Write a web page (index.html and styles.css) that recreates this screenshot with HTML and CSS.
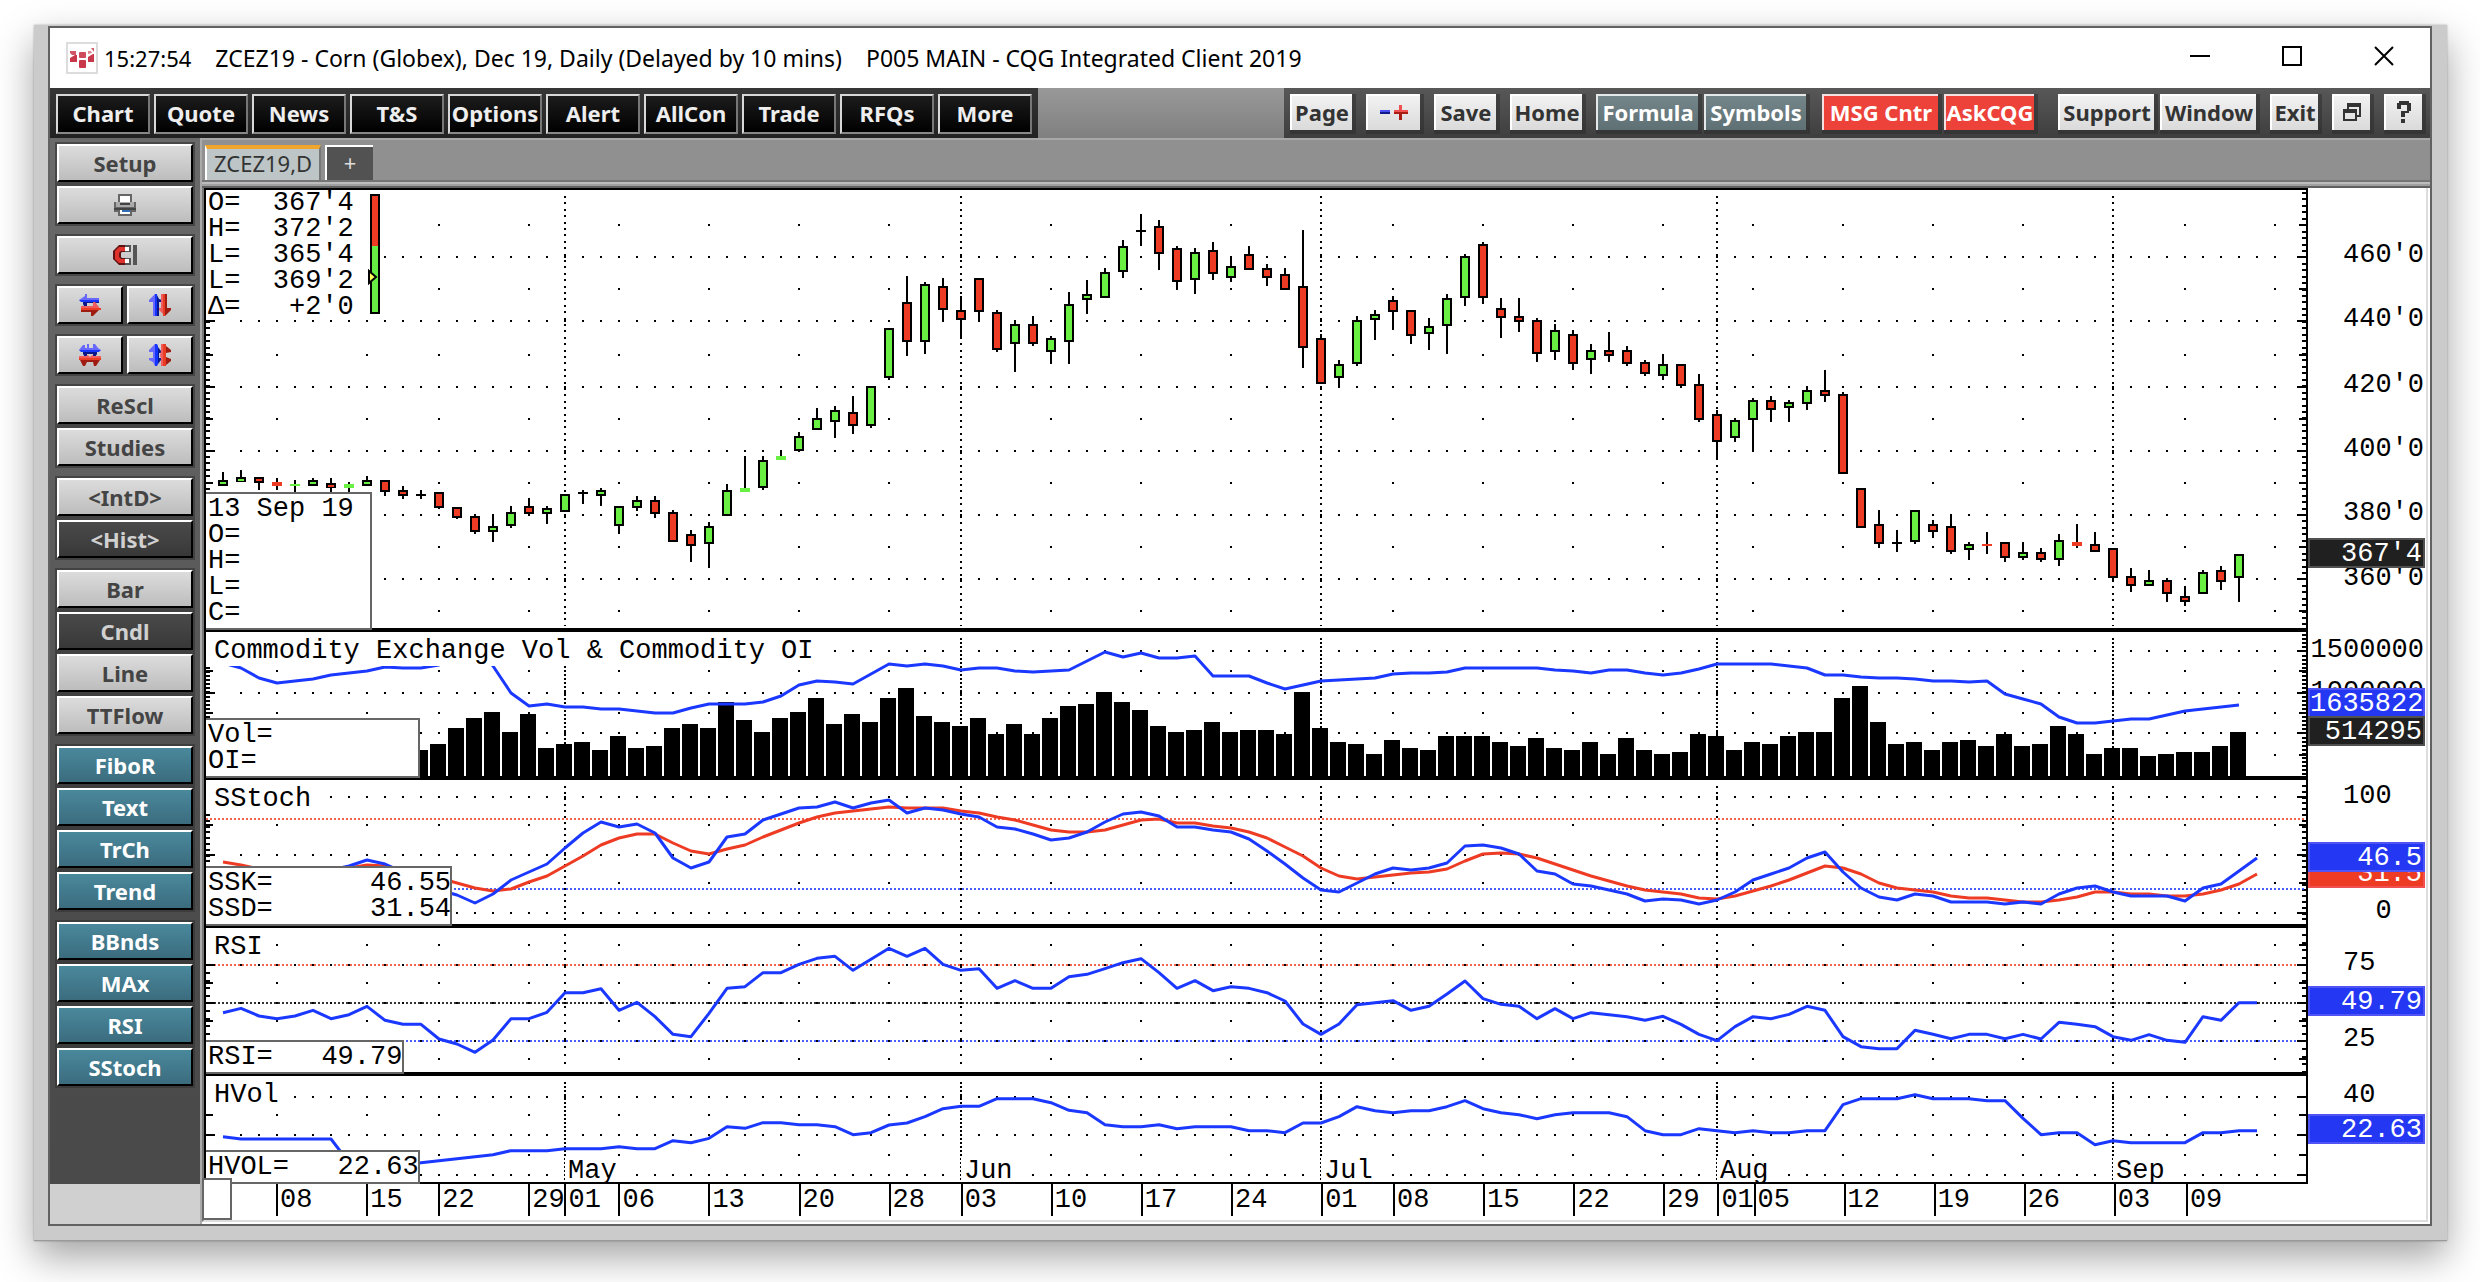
FILE: index.html
```
<!DOCTYPE html>
<html lang="en">
<head>
<meta charset="utf-8">
<title>ZCEZ19 - Corn (Globex), Dec 19, Daily - CQG Integrated Client 2019</title>
<link rel="stylesheet" href="styles.css">
</head>
<body>
<div class="frame">
<div class="window">

<header class="titlebar">
  <svg class="app-icon" viewBox="0 0 32 32" width="32" height="32" aria-hidden="true">
    <rect x="1" y="1" width="30" height="30" fill="#fff" stroke="#dcdcdc" stroke-width="2"/>
    <g fill="#c8374a">
      <path d="M4 9h6v4h-4l-2-2z" opacity=".85"/><path d="M4 20v-4l5-3h2v7z"/>
      <rect x="13" y="10" width="7" height="6" rx="1" opacity=".9"/><rect x="13" y="18" width="7" height="8" rx="1"/>
      <path d="M22 20v-5l5-3h1v8z"/><path d="M22 12v-3h3l1 2z" opacity=".6"/><path d="M25 6h3v4z" opacity=".8"/>
    </g>
  </svg>
  <h1 class="caption"><span class="clock">15:27:54</span><span>ZCEZ19 - Corn (Globex), Dec 19, Daily (Delayed by 10 mins)</span><span>P005 MAIN - CQG Integrated Client 2019</span></h1>
  <div class="controls">
    <button class="control" aria-label="Minimize"><svg viewBox="0 0 20 20" width="20" height="20"><path d="M0 10h20" stroke="#000" stroke-width="2"/></svg></button>
    <button class="control" aria-label="Maximize"><svg viewBox="0 0 20 20" width="20" height="20"><path d="M1 1h18v18H1z" fill="none" stroke="#000" stroke-width="2"/></svg></button>
    <button class="control" aria-label="Close"><svg viewBox="0 0 20 20" width="20" height="20"><path d="M1 1l18 18M19 1L1 19" stroke="#000" stroke-width="2"/></svg></button>
  </div>
</header>

<nav class="toolbar" aria-label="Main">
  <div class="apps">
    <button class="app">Chart</button><button class="app">Quote</button><button class="app">News</button><button class="app">T&amp;S</button><button class="app">Options</button><button class="app">Alert</button><button class="app">AllCon</button><button class="app">Trade</button><button class="app">RFQs</button><button class="app">More</button>
  </div>
  <div class="tools">
    <div class="cluster wide"><button class="tool w62">Page</button><button class="tool w54" aria-label="Less or more"><svg viewBox="0 0 28 20" width="28" height="20"><path d="M0 8h10v2H0z" fill="#4a50f0"/><path d="M0 10h10v2H0z" fill="#10188c"/><path d="M14 8h5V3h3v5h6v2H14z" fill="#f05050"/><path d="M14 10h14v2h-6v6h-3v-6h-5z" fill="#a81c14"/></svg></button><button class="tool w62">Save</button><button class="tool w72">Home</button></div>
    <div class="cluster"><button class="tool slate w102">Formula</button><button class="tool slate w102">Symbols</button></div>
    <div class="cluster messages"><button class="tool alert w116">MSG Cntr</button><button class="tool alert w90">AskCQG</button></div>
    <div class="cluster last"><button class="tool w96">Support</button><button class="tool w96">Window</button></div>
    <div class="cluster wide"><button class="tool w48">Exit</button><button class="tool w38" aria-label="Restore"><svg viewBox="0 0 18 18" width="18" height="18"><path fill="#333" fill-rule="evenodd" d="M4 0h14v14h-4v-2h2V4H6v2H4zM0 6h14v12H0zm2 4v6h10v-6z"/></svg></button><button class="tool w38" aria-label="Help"><svg viewBox="0 0 14 22" width="14" height="22"><path fill="#333" d="M2 0h10v2h2v8h-2v2H8v4H4v-6h6V4H4v4H0V2h2zM4 18h4v4H4z"/></svg></button></div>
  </div>
</nav>

<div class="main">
<aside class="sidebar">
  <div class="tray">
    <div class="group"><button class="key">Setup</button>
    <button class="key" aria-label="Print"><svg viewBox="0 0 22 22" width="22" height="22"><path fill="#666" d="M4 0h14v8h4v10h-4v4H4v-4H0V8h4z"/><path fill="#fff" d="M6 2h10v6H6z"/><path fill="#aaa" d="M2 8h18v5H2z"/><path fill="#444" d="M6 9h10v2H6zM0 14h22v2H0z"/><path fill="#fff" d="M6 16h10v4H6z"/><path fill="#2f6db5" d="M8 16h8v2H8z"/></svg></button></div>
    <div class="group"><button class="key" aria-label="Magnet"><svg viewBox="0 0 24 20" width="24" height="20"><path fill="#5c1414" d="M6 0h6v7H9L8 8v4l1 1h3v7H6l-4-4-2-2V6l2-2z"/><path fill="#e0322c" d="M6 2h6v4H8L6 8v4l2 2h4v4H6l-4-4V6z"/><path fill="#fff" d="M12 2h4v4h-4zM12 14h4v4h-4z"/><path fill="#555" d="M12 0h6v7h-6V6h4V2h-4zM12 13h6v7h-6v-2h4v-4h-4zM20 0h4v20h-4z"/></svg></button></div>
    <div class="group pair"><button class="key" aria-label="Scroll horizontally"><svg viewBox="0 0 22 22" width="22" height="22"><path fill="#6868ff" d="M6 0h2v4h12v2H0l6-4z"/><path fill="#1434ff" d="M0 6h20v2H2z"/><path fill="#0a168c" d="M4 8h4v6H6l-2-4zM8 8h12v1H8z"/><path fill="#f05c5c" d="M2 12h12V8h2l4 5v1H2z"/><path fill="#e83c24" d="M2 14h20v2H2z"/><path fill="#a01c10" d="M2 16h18l-4 4-2 2h-2v-4H2z"/></svg></button><button class="key" aria-label="Scroll vertically"><svg viewBox="0 0 22 22" width="22" height="22"><path fill="#6868ff" d="M6 0v22H4V8H0V6z"/><path fill="#1434ff" d="M6 0h2v22H6z"/><path fill="#0a168c" d="M8 1l2 4 3 1v2h-3v14H8z"/><path fill="#f05c5c" d="M12 0h2v20l-4-4v-2h2z"/><path fill="#e83c24" d="M14 0h2v22h-2z"/><path fill="#a01c10" d="M16 0h2v14h4v2l-6 6z"/></svg></button></div>
    <div class="group pair"><button class="key" aria-label="Scale horizontally"><svg viewBox="0 0 22 22" width="22" height="22"><path fill="#6868ff" d="M4 1h2v3h2V0h2v4h4V0h2l3 4 3 2H0z"/><path fill="#1434ff" d="M0 6h22l-2 2H2z"/><path fill="#0a168c" d="M4 8h14v2l-2 3h-2v-3H8v3H6l-2-3z"/><path fill="#f05c5c" d="M0 12h7l2-1 2 2 2-2 2 1h7v2H0z"/><path fill="#e83c24" d="M0 14h22v2H0z"/><path fill="#a01c10" d="M1 16h20l-4 6h-2l-1-4H8l-2 4H4z"/></svg></button><button class="key" aria-label="Scale vertically"><svg viewBox="0 0 22 22" width="22" height="22"><path fill="#6868ff" d="M6 0v22l-2-4-4-2v-2h4V8H0V6z"/><path fill="#1434ff" d="M6 0h2l1 2v18l-1 2H6z"/><path fill="#0a168c" d="M9 3l3 4v2h-2v5h2v2l-3 4z"/><path fill="#f05c5c" d="M12 0h2v22h-2v-7l-1-4 1-4z"/><path fill="#e83c24" d="M14 0h3v22h-3z"/><path fill="#a01c10" d="M17 2l5 4v2l-5 1v4l5 2v2l-5 4z"/></svg></button></div>
    <div class="group"><button class="key">ReScl</button><button class="key">Studies</button></div>
    <div class="group"><button class="key">&lt;IntD&gt;</button><button class="key on">&lt;Hist&gt;</button></div>
    <div class="group"><button class="key">Bar</button><button class="key on">Cndl</button><button class="key">Line</button><button class="key">TTFlow</button></div>
    <div class="group"><button class="key study">FiboR</button><button class="key study">Text</button><button class="key study">TrCh</button><button class="key study">Trend</button></div>
    <div class="group"><button class="key study">BBnds</button><button class="key study">MAx</button><button class="key study">RSI</button><button class="key study">SStoch</button></div>
  </div>
</aside>

<section class="workspace">
  <div class="tabs">
    <button class="tab">ZCEZ19,D</button><button class="tab add">+</button>
  </div>
  <div class="bevel"></div>
  <div class="charts">
    <section class="panel price">
      <div class="plot">
        <svg class="drawing" id="price" viewBox="206 190 2100 438" preserveAspectRatio="none"></svg>
        <div class="quote"><pre class="readout">O=  367'4
H=  372'2
L=  365'4
L=  369'2
Δ=   +2'0</pre><svg class="range" viewBox="0 0 12 120" width="12" height="120"><rect x="3" y="1" width="8" height="118" fill="#66ee44" stroke="#000" stroke-width="2"/><rect x="4" y="2" width="6" height="50" fill="#ee3b24"/><path d="M1 77v12l7-6z" fill="#ffff55" stroke="#000" stroke-width="2"/></svg></div>
        <pre class="legend w166">13 Sep 19
O=
H=
L=
C=</pre>
      </div>
      <div class="scale" id="scale-price"></div>
    </section>
    <section class="panel">
      <div class="plot">
        <svg class="drawing" id="volume" viewBox="206 632 2100 144" preserveAspectRatio="none"></svg>
        <h2 class="study-name">Commodity Exchange Vol &amp; Commodity OI</h2>
        <pre class="legend w214">Vol=
OI=</pre>
      </div>
      <div class="scale" id="scale-volume"></div>
    </section>
    <section class="panel">
      <div class="plot">
        <svg class="drawing" id="stoch" viewBox="206 780 2100 144" preserveAspectRatio="none"></svg>
        <h2 class="study-name">SStoch</h2>
        <pre class="legend w246">SSK=      46.55
SSD=      31.54</pre>
      </div>
      <div class="scale" id="scale-stoch"></div>
    </section>
    <section class="panel">
      <div class="plot">
        <svg class="drawing" id="rsi" viewBox="206 928 2100 144" preserveAspectRatio="none"></svg>
        <h2 class="study-name">RSI</h2>
        <pre class="legend w198">RSI=   49.79</pre>
      </div>
      <div class="scale" id="scale-rsi"></div>
    </section>
    <section class="panel hvol">
      <div class="plot">
        <svg class="drawing" id="hvol" viewBox="206 1076 2100 106" preserveAspectRatio="none"></svg>
        <h2 class="study-name">HVol</h2>
        <div id="months"></div>
        <pre class="legend w214">HVOL=   22.63</pre>
      </div>
      <div class="scale" id="scale-hvol"></div>
    </section>
    <div class="dates"><div class="date-track" id="dates"></div><input class="symbol-entry" aria-label="Symbol"></div>
  </div>
</section>
</div>

</div>
</div>
<script src="chart.js"></script>
</body>
</html>
```
FILE: styles.css
```
* { box-sizing: border-box; }

body {
  margin: 0;
  min-height: 100vh;
  padding: 25px 33px 41px 34px;
  display: flex;
  background: #fff;
  font-family: "Noto Sans", "Open Sans", sans-serif;
  font-size: 22px;
  color: #000;
}

button {
  font: inherit;
  margin: 0;
  padding: 0;
  border: 0;
  white-space: nowrap;
  display: flex;
  align-items: center;
  justify-content: center;
}

.frame {
  flex: 1;
  min-width: 0;
  display: flex;
  padding: 1px 15px 14px 14px;
  background: #cbcbcb;
  border-bottom: 1px solid #999;
  box-shadow: 0 0 2px rgba(0, 0, 0, .3), 0 16px 36px rgba(0, 0, 0, .36);
}

.window {
  flex: 1;
  min-width: 0;
  display: flex;
  flex-direction: column;
  border: 2px solid #626262;
  background: #fff;
}

/* Title bar */
.titlebar { display: flex; align-items: center; height: 60px; padding-left: 16px; }
.app-icon { margin-right: 6px; }
.caption { flex: 1; margin: 0; display: flex; align-items: baseline; gap: 24px; font-size: 23px; font-weight: 400; white-space: nowrap; }
.clock { font-size: 22px; }
.controls { display: flex; align-self: stretch; }
.control { width: 92px; padding-bottom: 4px; background: none; }

/* Toolbar */
.toolbar {
  display: flex;
  justify-content: space-between;
  height: 50px;
  background: linear-gradient(#999, #808080);
  font-weight: 700;
}
.apps { display: flex; gap: 4px; padding: 6px 6px 0 6px; background: linear-gradient(#363636, #222); }
.app {
  width: 94px;
  height: 40px;
  padding-bottom: 2px;
  color: #eee;
  background: linear-gradient(#1c1c1c, #000);
  border: 2px solid;
  border-color: #d8d8d8 #777 #888 #d8d8d8;
}
.tools { display: flex; gap: 14px; padding: 6px 8px 0 6px; background: linear-gradient(#585858, #3e3e3e); }
.cluster { display: flex; gap: 6px; }
.cluster.wide { gap: 14px; }
.cluster.messages { margin-left: 2px; }
.cluster.last { margin-left: 10px; }
.tool {
  height: 36px;
  padding-bottom: 2px;
  color: #333;
  background: linear-gradient(#f2f2f2, #dadada);
  border: 2px solid #fff;
  border-right-width: 0;
  border-bottom-width: 0;
  box-shadow: 2px 2px 0 2px rgba(40, 40, 40, .45);
}
.slate { color: #fff; background: linear-gradient(#74868a, #5f7074); border-color: #e4e8e8; }
.alert { color: #fff; background: #ec4239; border-color: #f4e0e0; }
.w38 { width: 38px; }
.w48 { width: 48px; }
.w54 { width: 54px; }
.w62 { width: 62px; }
.w72 { width: 72px; }
.w90 { width: 90px; }
.w96 { width: 96px; }
.w102 { width: 102px; }
.w116 { width: 116px; }

/* Sidebar */
.main { flex: 1; display: flex; min-height: 0; }
.sidebar { width: 150px; display: flex; flex-direction: column; padding-bottom: 40px; background: #d0d0d0; }
.tray {
  flex: 1;
  display: flex;
  flex-direction: column;
  gap: 12px;
  padding: 6px 7px 0 7px;
  background: linear-gradient(#6a6a6a, #606060 30%, #4c4c4c 70%, #4a4a4a);
}
.group { display: flex; flex-direction: column; gap: 4px; }
.pair { flex-direction: row; gap: 4px; }
.pair .key { flex: 1; }
.key {
  height: 38px;
  color: #444;
  font-weight: 700;
  background: linear-gradient(#dcdcdc, #bdbdbd);
  border: 2px solid;
  border-color: #fff #000 #000 #fff;
  box-shadow: 0 0 0 2px rgba(50, 50, 50, .6);
}
.key.on { color: #d0d0d0; background: linear-gradient(#4a4a4a, #383838); }
.key.study { color: #fff; background: linear-gradient(#4a889c, #3b6c7e); }

/* Workspace */
.workspace { flex: 1; min-width: 0; display: flex; flex-direction: column; border-left: 2px solid #aaa; }
.tabs { display: flex; gap: 4px; height: 42px; padding: 5px 0 0 3px; background: #909090; border-top: 2px solid #a8a8a8; }
.tab { width: 116px; padding-bottom: 4px; color: #333; background: #bdc5c6; border-top: 4px solid #f0a62c; border-left: 2px solid #fff; border-right: 2px solid #777; }
.tab.add { width: 48px; color: #ddd; background: #525252; border-top: 2px solid #fff; border-right: 0; }
.bevel { height: 8px; border-top: 2px solid #757575; border-bottom: 2px solid #606060; background: linear-gradient(#bcbcbc 50%, #a0a0a0 50%); }

.charts {
  flex: 1;
  min-height: 0;
  margin-right: 2px;
  display: grid;
  grid-template-rows: minmax(0, 444fr) minmax(0, 148fr) minmax(0, 148fr) minmax(0, 148fr) minmax(0, 108fr) 36px;
  border-left: 2px solid #777;
  border-right: 2px solid #ddd;
  border-bottom: 2px solid #ddd;
  margin-bottom: 2px;
  font-family: "Liberation Mono", monospace;
  font-size: 27px;
  line-height: 26px;
}
.panel { display: grid; grid-template-columns: minmax(0, 1fr) 118px; min-height: 0; }
.plot { position: relative; border: 2px solid #000; border-top: 0; border-bottom-width: 4px; min-height: 0; }
.price .plot { border-top: 2px solid #000; }
.hvol .plot { border-bottom-width: 2px; }
.drawing { display: block; width: 100%; height: 100%; }

.readout, .legend, .study-name { margin: 0; font: inherit; background: #fff; white-space: pre; }
.quote { position: absolute; left: 0; top: 0; width: 178px; padding-left: 2px; display: flex; justify-content: space-between; background: #fff; }
.range { margin: 4px 4px 6px 0; }
.legend { position: absolute; left: 0; bottom: -2px; padding: 2px 0 2px 2px; border: 2px solid #666; border-left: 0; }
.w166 { width: 166px; }
.w198 { width: 198px; }
.w214 { width: 214px; }
.w246 { width: 246px; }
.study-name { position: absolute; left: 0; top: 0; padding: 6px 4px 2px 8px; }

/* Price scale */
.scale { position: relative; }
.mark, .badge { position: absolute; right: 2px; height: 30px; line-height: 30px; margin-top: -13px; white-space: pre; }
.badge { left: 0; right: 1px; margin-top: -15px; line-height: 28px; padding-right: 1px; text-align: right; color: #fff; border: 2px solid; }
.badge.dark { background: #202020; border-color: #505050; }
.badge.blue { background: #2438f4; border-color: #5054f4; }
.badge.red { background: #ee3b24; border-color: #f05050; }

/* Dates */
.month { position: absolute; bottom: 0; height: 24px; padding: 0 4px 0 3px; background: #fff; }
.dates { position: relative; }
.date-track { position: relative; margin: 0 118px 0 2px; height: 32px; }
.date { position: absolute; top: 0; height: 32px; line-height: 33px; padding-left: 2px; margin-left: -1px; border-left: 2px solid #000; }
.symbol-entry { position: absolute; left: -2px; top: -6px; width: 30px; height: 42px; padding: 0; border: 2px solid #666; background: #fff; }
```
FILE: chart.js
```
const FIRST_X = 223, STEP = 18, LEFT = 206, WIDTH = 2100;
const BLUE = '#1a38ff', RED = '#ee3b24', GREEN = '#6af042';
const barX = i => FIRST_X + STEP * i;

// high, body top, body bottom, low, kind: g/r outlined, G/R plain, d doji
const candles = `472,480,486,486,g 470,477,482,482,g 477,477,483,490,r 478,482,486,490,R 480,484,486,492,G 478,480,486,486,g
478,483,488,492,r 482,484,488,492,G 476,480,486,486,g 480,480,492,496,r 486,490,496,499,r 490,494,494,499,d 492,492,508,509,r
507,507,518,519,r 514,516,532,534,r 514,526,532,542,g 506,512,526,528,g 498,506,514,515,r 506,508,514,524,g 494,494,512,512,g
490,492,492,504,d 488,490,496,506,g 506,506,526,534,g 496,500,508,511,g 496,500,514,518,r 510,512,542,542,r 530,534,546,562,r
522,526,544,568,g 484,490,516,516,g 456,488,492,492,G 456,460,488,490,g 450,456,460,460,G 432,436,451,451,g 408,418,430,430,g
406,410,422,438,g 396,412,426,434,r 386,386,426,428,g 328,328,378,380,g 276,302,342,356,r 282,284,342,354,g 278,286,310,322,r
296,310,320,338,r 278,278,312,322,r 310,312,350,352,r 320,324,344,372,g 316,324,344,346,r 336,338,352,364,g 292,304,342,364,g
280,294,300,314,g 268,272,298,298,g 240,246,272,278,g 214,230,230,246,d 220,226,254,270,r 246,248,282,290,r 248,252,280,294,g
242,250,274,280,r 256,266,278,282,g 246,254,270,270,r 264,268,278,286,r 268,274,290,290,r 230,286,348,368,r 334,338,384,384,r
360,364,378,388,g 316,320,364,366,g 310,314,320,340,g 296,300,312,330,r 310,310,336,344,r 318,326,334,350,g 294,298,326,354,g
254,256,298,306,g 242,244,298,304,r 298,308,318,338,r 298,316,322,332,r 318,320,354,362,r 324,330,352,360,g 330,334,364,370,r
344,350,360,374,g 332,350,356,362,r 346,350,364,366,r 360,362,374,376,r 354,364,376,380,g 364,364,386,388,r 374,384,420,422,r
410,414,442,460,r 418,420,438,442,g 398,400,420,452,g 396,400,410,422,r 400,402,408,422,g 386,390,404,410,g 370,390,396,402,r
392,394,474,474,r 488,488,528,528,r 510,524,544,548,r 530,542,542,552,d 510,510,542,544,g 520,524,532,538,r 514,526,552,554,r
542,544,550,560,g 532,544,546,554,R 542,542,558,562,r 542,552,558,560,g 548,552,560,562,r 534,540,560,566,g 524,542,546,548,R
532,544,552,552,r 548,548,578,579,r 568,576,586,592,r 570,580,586,586,g 578,580,594,602,r 586,596,602,606,r 570,572,594,594,g
566,570,582,590,r 554,554,578,602,g`.split(/\s+/).map(s => s.split(','));

const volume = [750,744,728,718,712,732,714,748,744,742,750,736,748,746,728,724,728,702,720,732,718,712,698,724,714,722,698,688,716,
722,726,718,734,724,734,718,706,704,692,702,710,726,732,730,722,732,730,730,734,692,728,742,744,754,740,748,750,736,736,736,742,
746,738,748,750,742,754,738,750,754,752,734,736,750,742,744,736,732,732,698,686,722,744,742,750,742,740,746,734,746,744,726,734,
754,748,748,756,754,752,752,746,732];

const interest = [663,668,678,683,681,679,675,673,671,667,668,668,665,655,650,666,693,706,704,707,707,709,709,711,713,713,708,704,704,704,
702,696,685,681,682,684,674,664,666,664,666,670,668,668,671,672,671,670,661,652,657,653,658,658,656,676,676,676,683,689,685,681,
680,679,678,674,673,673,672,668,668,668,668,668,670,671,673,670,670,673,675,673,669,664,664,664,664,666,668,675,675,677,678,678,
679,681,681,682,681,694,699,704,717,723,723,721,719,719,715,711,709,707,705];

const slowK = [870,874,878,880,880,876,870,866,860,864,872,882,890,895,903,894,880,872,864,848,833,822,827,824,833,858,868,862,837,834,820,
814,808,807,802,808,803,800,813,808,810,814,817,827,829,834,840,838,832,822,814,812,816,827,827,830,832,839,851,864,878,890,892,
883,874,868,870,868,863,846,845,848,854,871,874,884,886,890,894,901,899,900,904,900,892,880,874,868,858,852,872,888,897,900,894,
896,902,902,902,904,902,904,894,888,886,892,896,896,896,901,888,884,871,858];

const slowD = [862,865,869,872,874,874,872,868,865,866,870,874,878,883,888,891,889,882,876,866,856,845,838,834,834,843,851,854,849,845,837,
830,823,817,813,811,809,807,808,808,808,811,813,817,820,825,830,832,832,830,825,820,819,823,823,826,828,832,838,847,856,868,876,
879,877,875,873,872,869,861,854,853,854,858,864,870,876,881,886,890,892,894,898,899,896,891,886,880,873,866,868,874,883,888,890,
892,896,898,898,900,902,902,900,897,892,892,894,894,896,896,894,890,884,874];

// RSI and HVol values are stored in thirds of a unit below 840
const third = v => 840 + v / 3;
const rsi = [518,505,528,536,528,511,536,524,499,541,553,553,597,612,637,600,536,536,517,458,458,446,511,487,530,583,590,520,445,440,398,
398,373,355,349,391,358,325,349,325,373,391,386,445,422,445,445,410,403,386,368,356,398,445,422,452,440,445,458,483,552,583,552,
494,488,482,511,499,462,423,476,493,499,536,506,536,518,524,530,541,529,553,583,602,560,530,536,523,499,511,590,620,626,626,571,
583,596,583,583,596,583,597,547,553,560,590,601,584,601,607,530,541,488,488].map(third);

const hvol = [890,897,897,897,897,897,897,968,980,980,974,968,962,956,950,944,932,932,932,926,926,926,920,926,926,902,908,895,860,865,
848,848,854,854,860,884,878,855,849,830,806,799,799,776,776,776,788,811,818,854,860,860,854,866,860,860,860,872,872,878,849,849,
830,800,812,818,812,812,800,782,806,818,824,836,824,818,818,818,830,872,884,884,866,872,878,872,878,878,872,872,794,776,776,776,
764,776,776,776,782,782,835,884,878,878,914,902,908,908,908,908,878,878,872,872].map(third);

const weeks = [[3,'08'],[8,'15'],[12,'22'],[17,'29'],[22,'06'],[27,'13'],[32,'20'],[37,'28'],[46,'10'],[51,'17'],[56,'24'],
[65,'08'],[70,'15'],[75,'22'],[80,'29'],[85,'05'],[90,'12'],[95,'19'],[100,'26'],[109,'09']];
const monthStarts = [[19,'01','May'],[41,'03','Jun'],[61,'01','Jul'],[83,'01','Aug'],[105,'03','Sep']];

const rect = (x, y, w, h, fill = '#000') => `<rect x="${x}" y="${y}" width="${w}" height="${h}" fill="${fill}"/>`;
const crisp = s => `<g shape-rendering="crispEdges">${s}</g>`;
const curve = (ys, color) => `<polyline points="${ys.map((y, i) => barX(i) + ',' + y).join(' ')}" fill="none" stroke="${color}" stroke-width="3" stroke-linejoin="round"/>`;
const level = (y, color) => `<path d="M${LEFT} ${y}H2306" stroke="${color}" stroke-width="2" stroke-dasharray="2 2" opacity=".8"/>`;

function grid(p) {
  let s = '';
  for (const y of p.rows) for (let i = 1; i <= 114; i++) s += rect(barX(i) - 1, y - 1, 2, 2);
  for (const y of p.minor) for (const i of [...weeks.map(w => w[0]), 114]) s += rect(barX(i) - 1, y - 1, 2, 2);
  for (const [i] of monthStarts) s += `<path d="M${barX(i)} ${p.top + 6}V${p.bottom - 2}" stroke="#000" stroke-width="2" stroke-dasharray="2 ${p.gap}"/>`;
  for (let y = p.tickFrom; p.tick && y < p.bottom; y += p.tick) s += rect(LEFT, Math.round(y), 4, 2) + rect(2302, Math.round(y), 4, 2);
  for (const y of p.rows) s += rect(LEFT, y - 1, 9, 2) + rect(2297, y - 1, 9, 2);
  for (const y of p.minor) s += rect(LEFT, y - 1, 7, 2) + rect(2299, y - 1, 7, 2);
  return crisp(s);
}

function candle([h, t, b, l, kind], i) {
  [h, t, b, l] = [h, t, b, l].map(Number);
  const x = barX(i);
  let s = rect(x - 1, h, 2, l - h);
  if (kind === 'd') return s + rect(x - 5, t, 10, 2);
  const fill = kind.toLowerCase() === 'g' ? GREEN : RED;
  if (kind === 'G' || kind === 'R') return s + rect(x - 5, t, 10, b - t, fill);
  return s + rect(x - 5, t, 10, b - t) + rect(x - 3, t + 2, 6, Math.max(b - t - 4, 2), fill);
}

const draw = (id, s) => { document.getElementById(id).innerHTML = s; };

draw('price', grid({ top: 190, bottom: 628, rows: [257, 321, 387, 451, 515, 579], minor: [225, 289, 355, 419, 483, 547, 611], gap: 4.4, tickFrom: 192, tick: 6.44 })
  + crisp(candles.map(candle).join('')));
draw('volume', grid({ top: 632, bottom: 776, rows: [651, 693, 733], minor: [671, 713, 755], gap: 2, tickFrom: 634, tick: 4.1 })
  + crisp(volume.map((y, k) => rect(barX(k + 11) - 9, y, 16, 776 - y)).join('')) + curve(interest, BLUE));
draw('stoch', grid({ top: 780, bottom: 924, rows: [797, 855, 913], minor: [825, 883], gap: 4, tickFrom: 785, tick: 5.8 })
  + level(819, RED) + level(889, BLUE) + curve(slowD, RED) + curve(slowK, BLUE));
draw('rsi', level(965, RED) + level(1003, '#000') + level(1041, BLUE)
  + grid({ top: 928, bottom: 1072, rows: [965, 1003, 1041], minor: [945, 983, 1021, 1059], gap: 6, tickFrom: 934, tick: 7.6 }) + curve(rsi, BLUE));
draw('hvol', grid({ top: 1076, bottom: 1182, rows: [1097, 1135, 1175], minor: [1115, 1155], gap: 2 }) + curve(hvol, BLUE));

// Scale marks: [y, text, badge colour]
function scale(id, top, height, marks) {
  draw(id, marks.map(([y, text, color]) =>
    `<span class="${color ? 'badge ' + color : 'mark'}" style="top:${((y - top) / height * 100).toFixed(2)}%">${text}</span>`).join(''));
}
scale('scale-price', 188, 444, [[253, "460'0"], [317, "440'0"], [383, "420'0"], [447, "400'0"], [511, "380'0"], [576, "360'0"], [553, "367'4", 'dark']]);
scale('scale-volume', 632, 148, [[648, '1500000'], [690, '1000000'], [703, '1635822', 'blue'], [731, '514295', 'dark']]);
scale('scale-stoch', 780, 148, [[794, '100  '], [909, '0  '], [873, '31.5', 'red'], [857, '46.5', 'blue']]);
scale('scale-rsi', 928, 148, [[961, '75   '], [1037, '25   '], [1001, '49.79', 'blue']]);
scale('scale-hvol', 1076, 108, [[1093, '40   '], [1129, '22.63', 'blue']]);

const leftOf = i => ((barX(i) - LEFT) / WIDTH * 100).toFixed(2) + '%';
draw('months', monthStarts.map(([i, , name]) => `<span class="month" style="left:${leftOf(i)}">${name}</span>`).join(''));
draw('dates', [...weeks, ...monthStarts].map(([i, day]) => `<span class="date" style="left:${leftOf(i)}">${day}</span>`).join(''));
```
